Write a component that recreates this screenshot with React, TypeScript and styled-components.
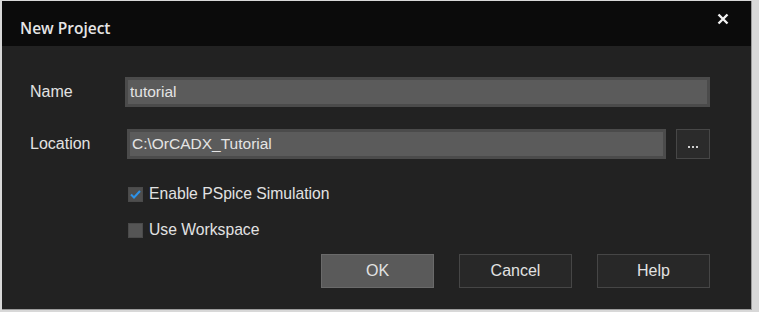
import { createGlobalStyle } from 'styled-components';
import styled from 'styled-components';

const GlobalStyle = createGlobalStyle`
  html, body {
    margin: 0;
    padding: 0;
    background: #e4e4e4;
  }
  body {
    font-family: "Liberation Sans", Arial, sans-serif;
  }
`;

const Screen = styled.div`
  width: 759px;
  height: 312px;
  padding: 1px 0 0 2px;
  box-sizing: border-box;
  background: #d8d8d8;
`;

const Dialog = styled.div`
  width: 750px;
  height: 309px;
  display: flex;
  flex-direction: column;
  background: #222222;
  border-right: 1px solid #9c9c9c;
  border-bottom: 1px solid #9c9c9c;
  box-sizing: border-box;
`;

const TitleBar = styled.div`
  height: 45px;
  flex: none;
  display: flex;
  align-items: center;
  justify-content: space-between;
  padding: 0 20px 0 18px;
  background: #0b0b0b;
`;

const Title = styled.span`
  font-family: "Open Sans", "Noto Sans", sans-serif;
  font-weight: 600;
  font-size: 15.5px;
  color: #e6e6e6;
  margin-top: 9px;
`;

const CloseButton = styled.button`
  width: 16px;
  height: 16px;
  padding: 0;
  border: 0;
  background: transparent;
  display: flex;
  align-items: center;
  justify-content: center;
  margin-top: -10px;
  cursor: pointer;
`;

const Body = styled.div`
  flex: 1;
  display: flex;
  flex-direction: column;
  padding: 31px 41px 0 28px;
`;

const FieldGrid = styled.div`
  display: grid;
  grid-template-columns: 95px 1fr;
  row-gap: 22px;
  align-items: center;
`;

const Label = styled.label`
  font-size: 16px;
  color: #e2e2e2;
  margin-top: -1px;
`;

const Input = styled.input`
  height: 30px;
  box-sizing: border-box;
  width: 100%;
  border: 3px solid #4b4b4b;
  background: #5b5b5b;
  color: #e4e4e4;
  font-family: "Liberation Sans", Arial, sans-serif;
  font-size: 15.5px;
  padding: 0 2px;
  outline: none;
`;

const LocationRow = styled.div`
  display: flex;
  gap: 10px;
  padding-left: 2px;
`;

const BrowseButton = styled.button`
  flex: none;
  width: 34px;
  height: 30px;
  box-sizing: border-box;
  border: 1px solid #474747;
  background: #2b2b2b;
  display: flex;
  align-items: flex-end;
  justify-content: center;
  gap: 2px;
  padding: 0 0 10px;
  cursor: pointer;
`;

const Dot = styled.span`
  width: 2px;
  height: 2px;
  background: #d0d0d0;
`;

const Options = styled.div`
  display: flex;
  flex-direction: column;
  gap: 16px;
  margin: 25px 0 0 98px;
`;

const CheckRow = styled.label`
  display: flex;
  align-items: center;
  gap: 6px;
  height: 20px;
  font-size: 15.7px;
  color: #e2e2e2;
`;

const Box = styled.span<{ $checked?: boolean }>`
  width: 15px;
  height: 15px;
  box-sizing: border-box;
  background: ${(p) => (p.$checked ? '#4e4e4e' : '#555555')};
  border: 1px solid #4a4a4a;
  display: flex;
  align-items: center;
  justify-content: center;
`;

const Actions = styled.div`
  display: flex;
  justify-content: flex-end;
  gap: 25px;
  margin-top: 14px;
`;

const Button = styled.button<{ $primary?: boolean }>`
  width: 113px;
  height: 34px;
  box-sizing: border-box;
  border: 1px solid ${(p) => (p.$primary ? '#6a6a6a' : '#464646')};
  background: ${(p) => (p.$primary ? '#5a5a5a' : '#282828')};
  color: #e2e2e2;
  font-family: "Liberation Sans", Arial, sans-serif;
  font-size: 16px;
  cursor: pointer;
`;

export default function App() {
  return (
    <>
      <GlobalStyle />
      <Screen>
        <Dialog>
          <TitleBar>
            <Title>New Project</Title>
            <CloseButton title="Close">
              <svg width="12" height="12" viewBox="0 0 12 12">
                <path d="M1.5 1.5 L10.5 10.5 M10.5 1.5 L1.5 10.5" stroke="#f2f2f2" strokeWidth="2.4" />
              </svg>
            </CloseButton>
          </TitleBar>
          <Body>
            <FieldGrid>
              <Label>Name</Label>
              <Input defaultValue="tutorial" />
              <Label>Location</Label>
              <LocationRow>
                <Input defaultValue="C:\OrCADX_Tutorial" />
                <BrowseButton title="Browse">
                  <Dot />
                  <Dot />
                  <Dot />
                </BrowseButton>
              </LocationRow>
            </FieldGrid>
            <Options>
              <CheckRow>
                <Box $checked>
                  <svg width="11" height="9" viewBox="0 0 11 9">
                    <path d="M1 4.5 L4 7.5 L10 1" stroke="#2d92e8" strokeWidth="2" fill="none" />
                  </svg>
                </Box>
                Enable PSpice Simulation
              </CheckRow>
              <CheckRow>
                <Box />
                Use Workspace
              </CheckRow>
            </Options>
            <Actions>
              <Button $primary>OK</Button>
              <Button>Cancel</Button>
              <Button>Help</Button>
            </Actions>
          </Body>
        </Dialog>
      </Screen>
    </>
  );
}
